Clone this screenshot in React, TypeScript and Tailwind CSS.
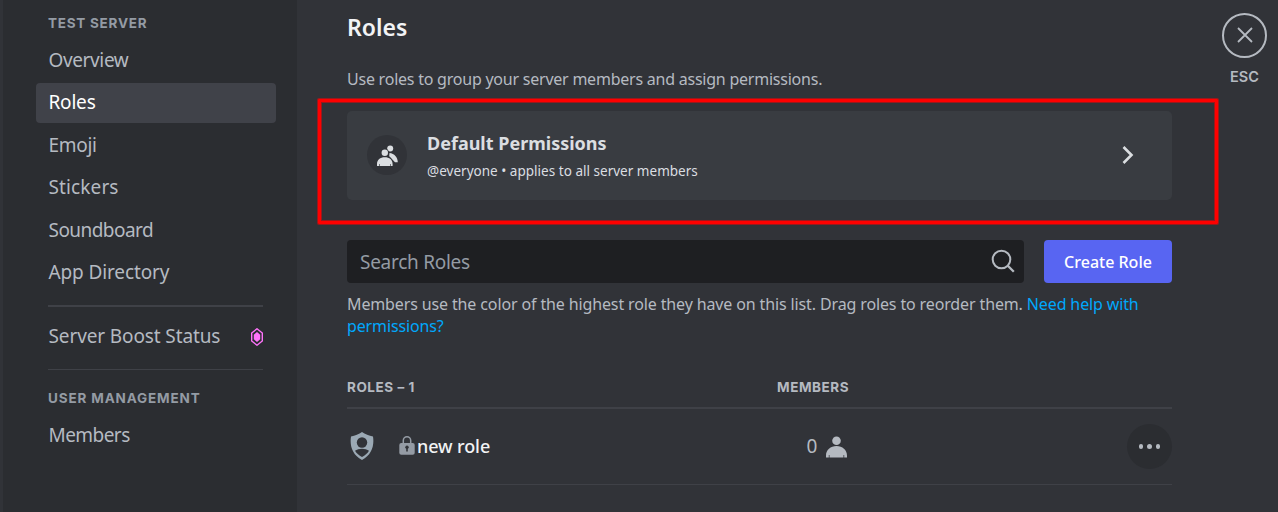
import React from "react";

const items = [
  { label: "Overview", cls: "tracking-[-0.37px]" },
  { label: "Roles", cls: "tracking-[-0.2px]" },
  { label: "Emoji", cls: "tracking-[-0.3px]" },
  { label: "Stickers", cls: "tracking-[0.12px]" },
  { label: "Soundboard", cls: "tracking-[-0.55px]" },
  { label: "App Directory", cls: "tracking-[-0.12px]" },
];

function BoostGem() {
  return (
    <svg className="h-[18px] w-3" viewBox="0 0 12 18">
      <path d="M6 .8 11.300 5v8L6 17.200.7 13V5Z" fill="none" stroke="#ff73fa" strokeWidth="1.400" />
      <path d="M6 4 9.200 6.700v4.600L6 14 2.800 11.300V6.700Z" fill="#ff73fa" />
    </svg>
  );
}

function Sidebar() {
  return (
    <nav className="flex w-[294px] shrink-0 flex-col bg-[#2b2d31] pl-[33px] text-[19px] text-[#b5bac1]">
      <h2 className="mt-[13px] h-5 pl-3 font-['Inter',sans-serif] text-[13.5px] leading-5 font-bold tracking-[0.75px] text-[#949ba4]">TEST SERVER</h2>
      <ul className="mt-[7.5px] flex flex-col gap-[2.5px]">
        {items.map((it) => (
          <li
            key={it.label}
            className={`flex h-10 w-60 items-center rounded pb-[1px] pl-[12.5px] ${it.cls} ${it.label === "Roles" ? "bg-[#404249] text-white" : ""}`}
          >
            {it.label}
          </li>
        ))}
      </ul>
      <div className="mt-[12px] ml-3 h-0.5 w-[215px] bg-[#3f4147]" />
      <div className="mt-[10px] flex h-10 w-[227px] items-center justify-between pl-[12.5px]">
        <span className="pb-[1px] tracking-[-0.12px]">Server Boost Status</span>
        <BoostGem />
      </div>
      <div className="mt-[12px] ml-3 h-px w-[215px] bg-[#3f4147]" />
      <h2 className="mt-[18px] h-5 pl-3 font-['Inter',sans-serif] text-[13.5px] leading-5 font-bold tracking-[0.85px] text-[#949ba4]">USER MANAGEMENT</h2>
      <div className="mt-[7px] flex h-10 items-center pl-[12.5px] tracking-[-0.55px]">Members</div>
    </nav>
  );
}

function Person({ className }: { className: string }) {
  return (
    <svg className={className} viewBox="0 0 21 22" fill="currentColor">
      <circle cx="10.5" cy="4.8" r="4.3" />
      <path d="M0 21.500v-1.800C0 13.800 4.600 10 10.500 10S21 13.800 21 19.700v1.800h-2.800v-2.600h-.7v2.600H3.500v-2.600h-.7v2.600Z" />
    </svg>
  );
}

export default function App() {
  return (
    <div className="relative flex h-[512px] w-[1278px] overflow-hidden bg-[#313338] pl-[3px] font-['Noto_Sans',sans-serif] whitespace-nowrap">
      <Sidebar />
      <main className="ml-[50px] flex w-[825px] shrink-0 flex-col">
        <h1 className="mt-[11px] h-8 text-[23px] leading-8 font-semibold text-[#f2f3f5]">Roles</h1>
        <p className="mt-[25px] h-[22px] text-base leading-[22px] tracking-[-0.23px] text-[#b5bac1]">Use roles to group your server members and assign permissions.</p>
        <section className="mt-[21px] flex h-[89px] items-center rounded-[5px] bg-[#393c41] pl-5">
          <div className="mb-px flex size-10 items-center justify-center rounded-full bg-[#313338]">
            <svg className="mt-px size-[22px]" viewBox="0 0 22 22" fill="#dbdee1">
              <circle cx="14.200" cy="3.500" r="3" />
              <path d="M13.500 8c4.800.5 8.300 4.300 8.300 9.200h-2.800c-1.500-1-3.500-4.500-5.800-6Z" />
              <circle cx="8.800" cy="7.800" r="4" fill="#313338" />
              <circle cx="8.800" cy="7.800" r="3.200" />
              <path d="M1 21v-2c0-4 3.200-6.700 7.800-6.700s7.800 2.700 7.800 6.700v2h-2v-2h-.6v2H3.700v-2h-.6v2Z" />
            </svg>
          </div>
          <div className="ml-5 flex-1">
            <h2 className="mt-px h-6 text-[18px] leading-6 font-bold text-[#dbdee1]">Default Permissions</h2>
            <p className="mt-[6px] h-5 text-[13.500px] leading-5 tracking-[0.02px] text-[#dbdee1]">@everyone • applies to all server members</p>
          </div>
          <svg className="mr-[38px] mb-px h-[18px] w-3" viewBox="0 0 12 18" fill="none" stroke="#dbdee1" strokeWidth="2.600">
            <path d="m1.500 1 8 8-8 8" />
          </svg>
        </section>
        <div className="mt-10 flex h-[43px] gap-5">
          <div className="flex w-[677px] items-center justify-between rounded bg-[#1e1f22] pl-[13px] text-[19px] text-[#949ba4]">
            <span className="pt-[1px] tracking-[-0.27px]">Search Roles</span>
            <svg className="mr-[9px] mb-[1px] size-6" viewBox="0 0 24 24" fill="none" stroke="#b5bac1" strokeWidth="2">
              <circle cx="10.500" cy="10.500" r="8.800" />
              <path d="m16.800 16.800 6 6" strokeWidth="2.300" />
            </svg>
          </div>
          <button className="w-32 rounded bg-[#5865f2] text-[16px] font-medium text-white">Create Role</button>
        </div>
        <p className="mt-[10px] text-base leading-[22px] tracking-[-0.13px] text-[#b5bac1]">
          Members use the color of the highest role they have on this list. Drag roles to reorder them. <span className="text-[#00a8fc]">Need help with<br />permissions?</span>
        </p>
        <div className="mt-[40px] flex h-5 font-['Inter',sans-serif] text-[13.5px] leading-5 font-bold tracking-[0.55px] text-[#b5bac1]">
          <span className="w-[430px]">ROLES – 1</span>
          <span>MEMBERS</span>
        </div>
        <div className="mt-[10px] h-0.5 bg-[#3f4147]" />
        <div className="flex h-[75px] items-center">
          <svg className="mb-[2px] ml-[3px] h-7 w-6" viewBox="0 0 24 28">
            <path d="M12 0c3 2.500 7 3.500 11 4.500C24.500 14 21.500 23 12 28 2.500 23-.5 14 1 4.500 5 3.500 9 2.500 12 0Z" fill="#9ba9b4" />
            <circle cx="12" cy="10.500" r="5.200" fill="#313338" />
            <path d="M5 18.800c3.500-2.800 10.500-2.800 14 0-1.700 2.700-4 4.700-7 6.300-3-1.600-5.300-3.600-7-6.300Z" fill="#313338" />
          </svg>
          <svg className="mb-[2px] ml-[25px] h-[19px] w-4" viewBox="0 0 16 19">
            <path d="M4.300 8V4.500a3.700 3.700 0 0 1 7.400 0V8" fill="none" stroke="#949ba4" strokeWidth="1.500" />
            <rect x=".3" y="7" width="15.400" height="11.700" rx="2" fill="#949ba4" />
            <circle cx="8" cy="11.300" r="1.700" fill="#313338" />
            <rect x="7.200" y="11.500" width="1.600" height="4" fill="#313338" />
          </svg>
          <span className="ml-[2px] w-[389.5px] text-[18px] font-medium tracking-[-0.1px] text-[#f2f3f5]">new role</span>
          <span className="text-[19px] text-[#b5bac1]">0</span>
          <Person className="ml-[9px] h-[22px] w-[21px] text-[#b5bac1]" />
          <div className="ml-auto flex size-[45px] items-center justify-center gap-[4px] rounded-full bg-[#2b2d31]">
            <i className="size-[4.500px] rounded-full bg-[#b5bac1]" />
            <i className="size-[4.500px] rounded-full bg-[#b5bac1]" />
            <i className="size-[4.500px] rounded-full bg-[#b5bac1]" />
          </div>
        </div>
        <div className="h-px bg-[#3f4147]" />
      </main>
      <aside className="mt-[13px] ml-[50px] flex w-[45px] flex-col items-center">
        <div className="flex size-[45px] items-center justify-center rounded-full border-2 border-[#b5bac1]">
          <svg className="mb-px size-4" viewBox="0 0 16 16" stroke="#b5bac1" strokeWidth="1.800">
            <path d="m1 1 14 14M15 1 1 15" />
          </svg>
        </div>
        <span className="mt-[9px] font-['Inter',sans-serif] text-[14.500px] leading-5 font-semibold text-[#b5bac1]">ESC</span>
      </aside>
      <div className="absolute top-[99px] left-[318px] h-[125px] w-[900px] rounded-[1px] border-3 border-[#ff0000] shadow-[0_0_0_1px_rgba(255,0,0,0.5),inset_0_0_0_1px_rgba(255,0,0,0.5)]" />
    </div>
  );
}
